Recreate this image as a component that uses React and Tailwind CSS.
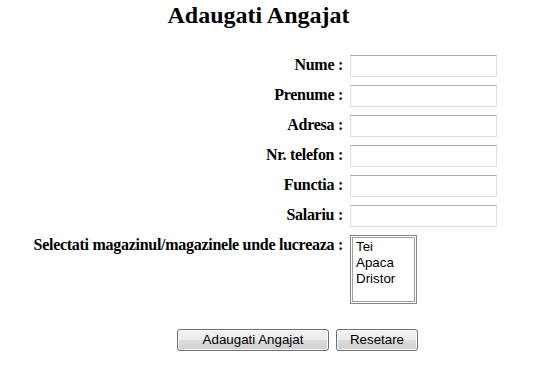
export default function App() {
  const rows = ["Nume :", "Prenume :", "Adresa :", "Nr. telefon :", "Functia :", "Salariu :"];
  const serif = { fontFamily: '"Liberation Serif", "Times New Roman", serif' };
  return (
    <div className="w-[555px] h-[381px] bg-white text-black overflow-hidden relative">
      <div className="w-[517px] pt-[2px] flex justify-center">
        <h1 className="text-[24px] font-bold leading-[27px]" style={serif}>Adaugati Angajat</h1>
      </div>
      <div className="mt-[22px] flex flex-col" style={serif}>
        {rows.map((r) => (
          <div key={r} className="h-[30px] flex items-center">
            <div className="w-[343px] text-right text-[16px] font-bold leading-[18px] tracking-[-0.28px] -mt-[2px]">{r}</div>
            <div className="ml-[7px] w-[147px] h-[22px] border border-[#dcdfe4] border-t-[#abadb3] bg-white"></div>
          </div>
        ))}
        <div className="mt-[4px] flex items-start">
          <div className="w-[343px] text-right text-[16px] font-bold leading-[18px] tracking-[-0.28px] pt-px">
            Selectati magazinul/magazinele unde lucreaza :
          </div>
          <div className="ml-[7px] w-[67px] h-[69px] border border-[#828790] p-px bg-white">
            <div
              className="w-full h-full border border-[#a0a0a0] pl-[3px] pt-px text-[13.33px] leading-[16px]"
              style={{ fontFamily: '"Liberation Sans", Arial, sans-serif' }}
            >
              <div>Tei</div>
              <div>Apaca</div>
              <div>Dristor</div>
            </div>
          </div>
        </div>
        <div className="mt-[25px] ml-[177px] flex gap-[7px]" style={{ fontFamily: '"Liberation Sans", Arial, sans-serif' }}>
          <button className="w-[152px] h-[22px] rounded-[3px] border border-[#707070] text-[13.33px] leading-none bg-[linear-gradient(to_bottom,#f2f2f2_0%,#ebebeb_50%,#dddddd_50%,#cfcfcf_100%)] shadow-[inset_0_0_0_1px_#fcfcfc]">
            Adaugati Angajat
          </button>
          <button className="w-[82px] h-[22px] rounded-[3px] border border-[#707070] text-[13.33px] leading-none bg-[linear-gradient(to_bottom,#f2f2f2_0%,#ebebeb_50%,#dddddd_50%,#cfcfcf_100%)] shadow-[inset_0_0_0_1px_#fcfcfc]">
            Resetare
          </button>
        </div>
      </div>
    </div>
  );
}
